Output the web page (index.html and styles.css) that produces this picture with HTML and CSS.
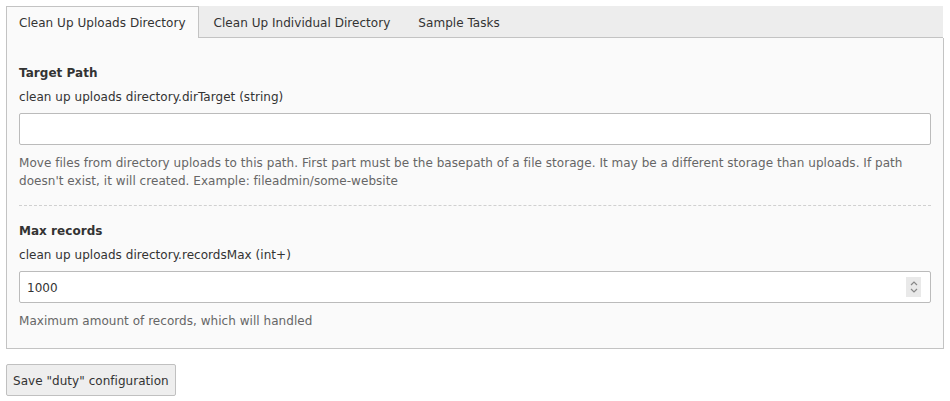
FILE: index.html
```html
<!DOCTYPE html>
<html>
<head>
<meta charset="utf-8">
<link rel="stylesheet" href="styles.css">
</head>
<body>
<div class="tabs">
  <div class="tab active">Clean Up Uploads Directory</div>
  <div class="tab">Clean Up Individual Directory</div>
  <div class="tab">Sample Tasks</div>
</div>
<div class="panel">
  <div class="field">
    <div class="label">Target Path</div>
    <div class="desc">clean up uploads directory.dirTarget (string)</div>
    <div class="input"></div>
    <div class="help">Move files from directory uploads to this path. First part must be the basepath of a file storage. It may be a different storage than uploads. If path doesn't exist, it will created. Example: fileadmin/some-website</div>
  </div>
  <div class="field">
    <div class="label">Max records</div>
    <div class="desc">clean up uploads directory.recordsMax (int+)</div>
    <div class="input number">1000
      <span class="spin"><svg width="14" height="20" viewBox="0 0 14 20"><path d="M4 8 L7 5 L10 8" fill="none" stroke="#888" stroke-width="1.2"/><path d="M4 12 L7 15 L10 12" fill="none" stroke="#888" stroke-width="1.2"/></svg></span>
    </div>
    <div class="help">Maximum amount of records, which will handled</div>
  </div>
</div>
<div class="actions">
  <button class="btn">Save "duty" configuration</button>
</div>
</body>
</html>
```
FILE: styles.css
```css
html, body {
  margin: 0;
  padding: 0;
  background: #fff;
}
body {
  padding: 6px 6px 0 6px;
  font-family: "DejaVu Sans", Verdana, sans-serif;
  font-size: 12px;
  letter-spacing: 0.04px;
  color: #333;
}
.tabs {
  display: flex;
  height: 31px;
  background: #ededed;
  border-bottom: 1px solid #c3c3c3;
  margin-right: 1px;
}
.tab {
  box-sizing: border-box;
  height: 31px;
  padding: 1px 12px 0 12px;
  line-height: 30px;
  border: 1px solid transparent;
  border-bottom: none;
  margin-right: 2px;
  color: #333;
}
.tab.active {
  background: #fafafa;
  border-color: #c3c3c3;
  height: 32px;
  margin-bottom: -1px;
}
.panel {
  background: #fafafa;
  border: 1px solid #c3c3c3;
  border-top: none;
  padding: 25px 12px 18px 12px;
}
.field + .field {
  border-top: 1px dashed #d0d0d0;
  margin-top: 15px;
  padding-top: 15px;
}
.label {
  font-weight: bold;
  line-height: 18px;
  padding-top: 1px;
  margin-bottom: 5px;
}
.desc {
  line-height: 18px;
  padding-top: 1px;
  margin-bottom: 7px;
}
.input {
  position: relative;
  box-sizing: border-box;
  height: 32px;
  border: 1px solid #bbb;
  border-radius: 2px;
  background: #fff;
  padding: 2px 7px 0 7px;
  line-height: 28px;
  color: #333;
}
.spin {
  position: absolute;
  right: 9px;
  top: 5px;
  width: 15px;
  height: 20px;
  background: #e9e9e9;
  display: flex;
  align-items: center;
  justify-content: center;
}
.help {
  margin-top: 8px;
  padding-top: 1px;
  line-height: 18px;
  color: #666;
}
.actions {
  margin-top: 15px;
}
.btn {
  font-family: "DejaVu Sans", Verdana, sans-serif;
  font-size: 12px;
  letter-spacing: 0.04px;
  color: #333;
  background: #eee;
  border: 1px solid #c0c0c0;
  border-radius: 2px;
  height: 32px;
  padding: 1px 6px 0 6px;
  margin: 0;
}
```
